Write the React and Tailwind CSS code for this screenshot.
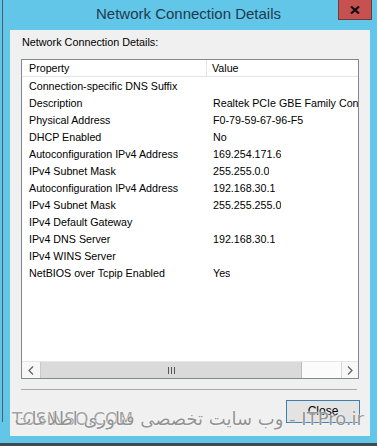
export default function App() {
  const rows = [
    ["Connection-specific DNS Suffix", ""],
    ["Description", "Realtek PCIe GBE Family Controller"],
    ["Physical Address", "F0-79-59-67-96-F5"],
    ["DHCP Enabled", "No"],
    ["Autoconfiguration IPv4 Address", "169.254.171.6"],
    ["IPv4 Subnet Mask", "255.255.0.0"],
    ["Autoconfiguration IPv4 Address", "192.168.30.1"],
    ["IPv4 Subnet Mask", "255.255.255.0"],
    ["IPv4 Default Gateway", ""],
    ["IPv4 DNS Server", "192.168.30.1"],
    ["IPv4 WINS Server", ""],
    ["NetBIOS over Tcpip Enabled", "Yes"],
  ];
  return (
    <div className="relative w-[377px] h-[446px] bg-[#62c6e8] overflow-hidden font-['Liberation_Sans',Arial,sans-serif] text-black">
      {/* background edges */}
      <div className="absolute left-[2px] top-0 h-[422px] w-px bg-[#4d5d66]" />
      <div className="absolute left-0 bottom-0 h-[3px] w-full bg-[#3f4a52]" />

      {/* title bar */}
      <div className="h-[30px] flex items-center justify-center text-[15px] text-[#1e3b4e] pb-[1px]">
        Network Connection Details
      </div>
      <div className="absolute left-[338px] top-0 w-[34px] h-[20px] bg-[#c75050] border border-t-0 border-[#6b3a3a] flex items-center justify-center">
        <svg width="10" height="8" viewBox="0 0 10 8">
          <path d="M1 0.5 L9 7.5 M9 0.5 L1 7.5" stroke="#111" strokeWidth="2.2" />
        </svg>
      </div>

      {/* client area */}
      <div className="ml-[10px] mr-[7px] h-[406px] bg-[#f0f0f0] pl-[11px] flex flex-col">
        <div className="h-[29px] pt-[5px] pl-[1px] leading-[15px] text-[10.8px]">Network Connection Details:</div>
        <div className="w-[338px] h-[320px] border border-[#828790] bg-white flex flex-col text-[10.7px]">
          <div className="h-[17px] flex border-b border-[#e5e5e5] leading-[17px]">
            <div className="w-[185px] pl-[7px] border-r border-[#e5e5e5]">Property</div>
            <div className="pl-[5px]">Value</div>
          </div>
          <div className="flex-1 overflow-hidden">
            {rows.map(([p, v], i) => (
              <div key={i} className="h-[17px] flex leading-[18px] whitespace-nowrap">
                <div className="w-[185px] pl-[7px] shrink-0">{p}</div>
                <div className="pl-[6px] overflow-hidden">{v}</div>
              </div>
            ))}
          </div>
          {/* horizontal scrollbar */}
          <div className="h-[17px] flex bg-[#f7f7f7] border-t border-[#e6e6e6]">
            <div className="w-[19px] flex items-center justify-center border-r border-[#c9c9c9] bg-[#f7f7f7]">
              <svg width="6" height="9" viewBox="0 0 6 9">
                <path d="M5 0.5 L1 4.5 L5 8.5" stroke="#606060" strokeWidth="1.2" fill="none" />
              </svg>
            </div>
            <div className="w-[261px] bg-[#dadada] border-r border-[#b9b9b9] flex items-center justify-center">
              <svg width="7" height="7" viewBox="0 0 7 7">
                <path d="M0.5 0 V7 M3.5 0 V7 M6.5 0 V7" stroke="#555" strokeWidth="1" />
              </svg>
            </div>
            <div className="flex-1 bg-[#fbfbfb]" />
            <div className="w-[17px] flex items-center justify-center border-l border-[#d6d6d6] bg-[#f7f7f7]">
              <svg width="6" height="9" viewBox="0 0 6 9">
                <path d="M1 0.5 L5 4.5 L1 8.5" stroke="#606060" strokeWidth="1.2" fill="none" />
              </svg>
            </div>
          </div>
        </div>
        <div className="mt-[10px] w-[336px] h-px bg-[#a9a9a9]" />
        <div className="mt-[10px] flex justify-end pr-[10px]">
          <div className="w-[74px] h-[23px] border border-[#3c7fb1] bg-[#e3e3e3] flex items-start justify-center text-[12px] pt-[3px] leading-[14px]">
            Close
          </div>
        </div>
      </div>

      {/* watermark overlay */}
      <div className="absolute left-[12px] top-[409px] text-[17px] leading-[20px] text-[#a0a0a0] font-['DejaVu_Sans',sans-serif] [text-shadow:0_0_2px_#ffffff,0_0_1px_#ffffff]">
        TOSINSO.COM
      </div>
      <div className="absolute right-[13px] top-[409px] text-[18px] leading-[20px] text-[#939393] font-['DejaVu_Sans',sans-serif] whitespace-nowrap [text-shadow:0_0_2px_#ffffff,0_0_1px_#ffffff]">
        وب سایت تخصصی فناوری اطلاعات - ITPro.ir
      </div>
    </div>
  );
}
